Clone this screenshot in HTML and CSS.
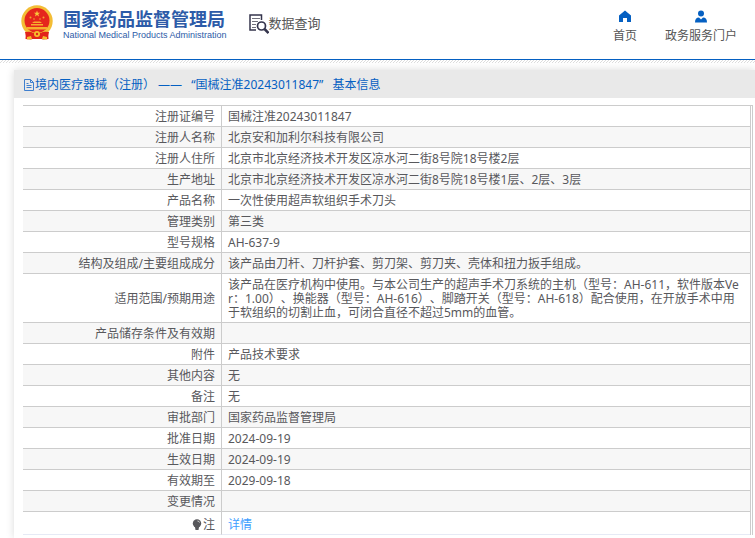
FILE: index.html
```html
<!DOCTYPE html>
<html lang="zh-CN">
<head>
<meta charset="utf-8">
<title>国家药品监督管理局 数据查询</title>
<link rel="stylesheet" href="styles.css">
</head>
<body>
<header class="site-header">
  <div class="brand">
    <svg class="emblem" viewBox="0 0 34 36" aria-hidden="true">
      <path fill="#e2231a" d="M6 25h22l.5 9-5.500.5-6-2-6 2-5.500-.5z"/>
      <circle cx="17" cy="16" r="15.700" fill="#f3bd35"/>
      <circle cx="17" cy="15.500" r="12.500" fill="#e5261d"/>
      <path fill="#f9c83c" d="M17 5.500l.8 2.200h2.400l-1.900 1.400.7 2.300-2-1.400-2 1.400.7-2.300-1.900-1.400h2.400z"/>
      <g fill="#f5a52f"><circle cx="10.500" cy="12.500" r="1"/><circle cx="14" cy="14" r=".8"/><circle cx="20" cy="14" r=".8"/><circle cx="23.500" cy="12.500" r="1"/></g>
      <path fill="#f6b02d" d="M12 18l2-1.500h6l2 1.500zM11 19h12v1.500H11zM7 22h20v2.500H7z"/>
      <path fill="#e2231a" d="M5 27q6-1 8 1h8q2-2 8-1l-1 4q-5 0-7 3h-8q-2-3-7-3z"/>
      <circle cx="17" cy="29" r="3" fill="#f6bd2b"/>
      <circle cx="17" cy="29" r="1.200" fill="#e2231a"/>
      <path fill="#f6bd2b" d="M7 32l4-1 1 3-5 .5zM27 32l-4-1-1 3 5 .5z"/>
    </svg>
    <div class="brand-text">
      <div class="brand-cn">国家药品监督管理局</div>
      <div class="brand-en">National Medical Products Administration</div>
    </div>
  </div>
  <div class="section-name">
    <svg class="search-doc" viewBox="0 -2 20 22" aria-hidden="true">
      <g fill="none" stroke="#34344c">
        <path stroke-width="1.500" d="M7 16H1V1h11.500v5"/>
        <path stroke="#70707c" d="M3 4.500h8M3 7.500h6M3 10.500h4M3 13.500h4"/>
        <circle cx="12.500" cy="12" r="4" stroke-width="1.700"/>
        <path stroke-width="2.500" d="M15.500 15l4 4"/>
      </g>
    </svg>
    <span>数据查询</span>
  </div>
  <nav class="site-nav">
    <a href="#home">
      <svg viewBox="0 0 14 12" aria-hidden="true"><path fill="#0560c2" d="M7 0l6 5v6.500H9V7.500H5v4H1V5z"/></svg>
      <span>首页</span>
    </a>
    <a href="#portal">
      <svg viewBox="0 0 14 12" aria-hidden="true"><circle cx="7" cy="3" r="3" fill="#0560c2"/><path fill="#0560c2" d="M1 12q0-5 4-5l2 2 2-2q4 0 4 5z"/></svg>
      <span>政务服务门户</span>
    </a>
  </nav>
</header>
<div class="hatch"></div>
<main class="panel">
  <h1 class="panel-title">
    <svg viewBox="0 0 11 12" aria-hidden="true"><path fill="none" stroke="#3f7fce" d="M.5 .5h6l3 3v8h-9zM6.500 .5v3h3M2.500 4.500h2M2.500 6.500h5M2.500 8.500h5"/></svg><span>境内医疗器械（注册） —— <span class="number">“国械注准20243011847”</span> 基本信息</span>
  </h1>
  <div class="table-wrap">
    <table class="details">
      <tbody>
        <tr><th scope="row">注册证编号</th><td>国械注准20243011847</td></tr>
        <tr><th scope="row">注册人名称</th><td>北京安和加利尔科技有限公司</td></tr>
        <tr><th scope="row">注册人住所</th><td>北京市北京经济技术开发区凉水河二街8号院18号楼2层</td></tr>
        <tr><th scope="row">生产地址</th><td>北京市北京经济技术开发区凉水河二街8号院18号楼1层、2层、3层</td></tr>
        <tr><th scope="row">产品名称</th><td>一次性使用超声软组织手术刀头</td></tr>
        <tr><th scope="row">管理类别</th><td>第三类</td></tr>
        <tr><th scope="row">型号规格</th><td>AH-637-9</td></tr>
        <tr><th scope="row">结构及组成/主要组成成分</th><td>该产品由刀杆、刀杆护套、剪刀架、剪刀夹、壳体和扭力扳手组成。</td></tr>
        <tr><th scope="row">适用范围/预期用途</th><td>该产品在医疗机构中使用。与本公司生产的超声手术刀系统的主机（型号：AH-611，软件版本Ver：1.00）、换能器（型号：AH-616）、脚踏开关（型号：AH-618）配合使用，在开放手术中用于软组织的切割止血，可闭合直径不超过5mm的血管。</td></tr>
        <tr><th scope="row">产品储存条件及有效期</th><td></td></tr>
        <tr><th scope="row">附件</th><td>产品技术要求</td></tr>
        <tr><th scope="row">其他内容</th><td>无</td></tr>
        <tr><th scope="row">备注</th><td>无</td></tr>
        <tr><th scope="row">审批部门</th><td>国家药品监督管理局</td></tr>
        <tr><th scope="row">批准日期</th><td>2024-09-19</td></tr>
        <tr><th scope="row">生效日期</th><td>2024-09-19</td></tr>
        <tr><th scope="row">有效期至</th><td>2029-09-18</td></tr>
        <tr><th scope="row">变更情况</th><td></td></tr>
        <tr class="note"><th scope="row"><svg viewBox="0 0 10 12" aria-hidden="true"><circle cx="5" cy="4.500" r="4.200" fill="#58585c"/><path fill="#58585c" d="M3 8h4l-.5 3h-3z"/><path fill="none" stroke="#ddd" d="M5.500 2q1.500 0 2 1.500"/></svg>注</th><td><a href="#details">详情</a></td></tr>
      </tbody>
    </table>
  </div>
</main>
</body>
</html>
```
FILE: styles.css
```css
* {
  box-sizing: border-box;
}

body {
  margin: 0;
  background: #fff;
  color: #58585c;
  font-family: "Noto Sans", "Noto Sans CJK SC", sans-serif;
  font-size: 12px;
  line-height: 14px;
  text-spacing-trim: space-all;
}

a {
  text-decoration: none;
}

.site-header {
  display: flex;
  align-items: flex-start;
  height: 60px;
  padding: 5px 18px 0 20px;
  border-bottom: 1px solid #0560c2;
}

.brand {
  display: flex;
  gap: 9px;
}

.emblem {
  width: 34px;
  height: 36px;
}

.brand-text {
  padding-top: 3px;
  color: #2d5ba8;
  white-space: nowrap;
}

.brand-cn {
  font-family: "Noto Sans CJK SC", sans-serif;
  font-size: 18px;
  font-weight: 700;
  line-height: 20px;
}

.brand-en {
  font-family: "Liberation Sans", sans-serif;
  font-size: 9px;
  line-height: 14px;
}

.section-name {
  display: flex;
  align-items: center;
  margin: 7px 0 0 22px;
  color: #555;
  font-size: 13px;
  line-height: 20px;
  white-space: nowrap;
}

.search-doc {
  width: 20px;
  height: 22px;
}

.site-nav {
  display: flex;
  gap: 28px;
  margin: 5px 0 0 auto;
}

.site-nav a {
  display: flex;
  flex-direction: column;
  align-items: center;
  gap: 3px;
  color: #555;
  line-height: 20px;
  white-space: nowrap;
}

.site-nav svg {
  width: 14px;
  height: 13px;
}

.hatch {
  height: 3px;
  background: linear-gradient(135deg, #fff 35%, #ddd 35% 65%, #fff 65%) 0 0 / 3px 3px;
}

.panel {
  margin: 7px 0 0 14px;
  padding-bottom: 3px;
  background: #fff;
  box-shadow: 0 0 8px rgba(0, 0, 0, 0.15);
}

.panel-title {
  display: flex;
  align-items: center;
  height: 28px;
  margin: 0;
  padding: 2px 0 0 10px;
  background: #e9e9e9;
  color: #0560c2;
  font-size: 12px;
  font-weight: 400;
  white-space: nowrap;
}

.panel-title svg {
  width: 11px;
  height: 12px;
}

.number {
  margin: 0 6px;
}

.table-wrap {
  margin: 7px 2px 0 9px;
  padding-right: 1px;
  border-top: 1px solid #ccc;
  border-right: 1px solid #ccc;
}

.details {
  width: 100%;
  border-spacing: 0;
  border-right: 1px solid #ccc;
  table-layout: fixed;
}

.details th,
.details td {
  padding: 4px 6px 2px;
  border-bottom: 1px solid #ccc;
  font-weight: 400;
  word-break: break-all;
}

.details th {
  width: 199px;
  border-right: 1px solid #ccc;
  text-align: right;
}

.details td {
  text-align: left;
}

.details tr:nth-child(even) {
  background: #f7f7f7;
}

.details .note th,
.details .note td {
  padding-top: 6px;
  border-bottom-color: #e6eaf5;
}

.note svg {
  width: 10px;
  height: 12px;
  margin-right: 1px;
  vertical-align: -2px;
}

.note a {
  color: #409eff;
}
```
